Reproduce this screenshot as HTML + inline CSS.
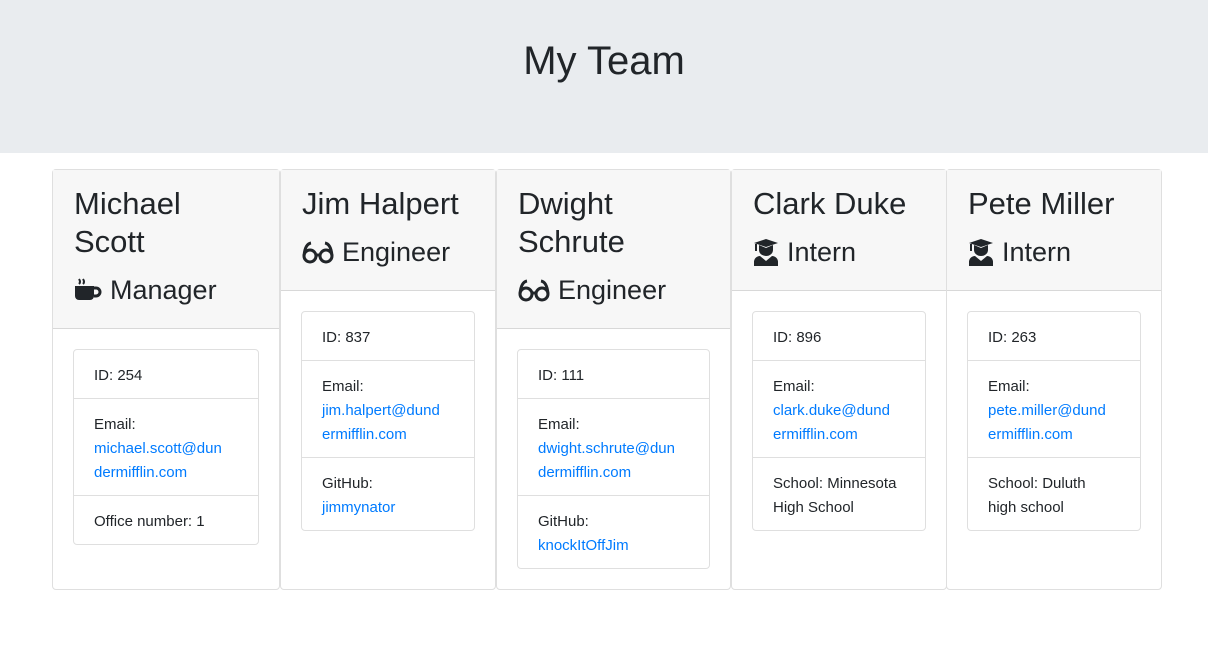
<!DOCTYPE html>
<html><head><meta charset="utf-8"><style>
*{box-sizing:border-box;margin:0;padding:0}
body{width:1208px;height:647px;background:#fff;font-family:"Liberation Sans",sans-serif;color:#212529;position:relative;overflow:hidden}
.jumbo{position:absolute;left:0;top:0;width:1208px;height:153px;background:#e9ecef}
.jumbo h1{position:absolute;left:0;right:0;top:36px;text-align:center;font-weight:400;font-size:40px;line-height:50px}
.card{position:absolute;top:169px;height:421px;border:1px solid rgba(0,0,0,.125);border-radius:4px;background:#fff}
.hd{background:#f7f7f7;border-bottom:1px solid rgba(0,0,0,.125);padding:15px 20px 21px 21px}
.hd h2{font-weight:400;font-size:31px;line-height:38px}
.hd h3{font-weight:400;font-size:27px;line-height:34px;margin-top:12px;display:flex;align-items:center}
.hd h3 svg{margin-right:8px}
.bd{padding:20px}
ul{list-style:none;border:1px solid rgba(0,0,0,.125);border-radius:4px}
li{padding:14px 20px 10px;font-size:15px;line-height:24px;border-top:1px solid rgba(0,0,0,.125)}
li:first-child{border-top:0}
a{color:#007bff;text-decoration:none}
</style></head><body>
<div class="jumbo"><h1>My Team</h1></div>

<div class="card" style="left:52px;width:228px">
<div class="hd"><h2>Michael<br>Scott</h2><h3><svg width="28" height="26" viewBox="0 0 28 26"><path d="M5 2 q2 3 0 5 M9 2 q2 3 0 5" stroke="#212529" stroke-width="2" fill="none"/><path d="M1 9 h19 v10 a4 4 0 0 1 -4 4 h-11 a4 4 0 0 1 -4 -4z" fill="#212529"/><path d="M20 11 h2 a4 4 0 0 1 0 8 h-2" stroke="#212529" stroke-width="3" fill="none"/></svg>Manager</h3></div>
<div class="bd"><ul><li>ID: 254</li><li>Email:<br><a>michael.scott@dun<br>dermifflin.com</a></li><li>Office number: 1</li></ul></div>
</div>

<div class="card" style="left:280px;width:216px">
<div class="hd"><h2>Jim Halpert</h2><h3><svg width="32" height="24" viewBox="0 0 32 24"><circle cx="8" cy="16" r="6" stroke="#212529" stroke-width="3" fill="none"/><circle cx="24" cy="16" r="6" stroke="#212529" stroke-width="3" fill="none"/><path d="M14 15 h4 M2 16 Q3 4 9 3 M30 16 Q29 4 23 3" stroke="#212529" stroke-width="3" fill="none"/></svg>Engineer</h3></div>
<div class="bd"><ul><li>ID: 837</li><li>Email:<br><a>jim.halpert@dund<br>ermifflin.com</a></li><li>GitHub:<br><a>jimmynator</a></li></ul></div>
</div>

<div class="card" style="left:496px;width:235px">
<div class="hd"><h2>Dwight<br>Schrute</h2><h3><svg width="32" height="24" viewBox="0 0 32 24"><circle cx="8" cy="16" r="6" stroke="#212529" stroke-width="3" fill="none"/><circle cx="24" cy="16" r="6" stroke="#212529" stroke-width="3" fill="none"/><path d="M14 15 h4 M2 16 Q3 4 9 3 M30 16 Q29 4 23 3" stroke="#212529" stroke-width="3" fill="none"/></svg>Engineer</h3></div>
<div class="bd"><ul><li>ID: 111</li><li>Email:<br><a>dwight.schrute@dun<br>dermifflin.com</a></li><li>GitHub:<br><a>knockItOffJim</a></li></ul></div>
</div>

<div class="card" style="left:731px;width:216px">
<div class="hd"><h2>Clark Duke</h2><h3><svg width="26" height="28" viewBox="0 0 26 28"><path d="M13 1 L25 5 L13 9 L1 5z" fill="#212529"/><path d="M6 7 v5 a7 6 0 0 0 14 0 v-5 l-7 3z" fill="#212529"/><path d="M3 6 v7" stroke="#212529" stroke-width="2"/><path d="M1 28 v-4 a6 6 0 0 1 6 -6 l6 5 l6 -5 a6 6 0 0 1 6 6 v4z" fill="#212529"/></svg>Intern</h3></div>
<div class="bd"><ul><li>ID: 896</li><li>Email:<br><a>clark.duke@dund<br>ermifflin.com</a></li><li>School: Minnesota<br>High School</li></ul></div>
</div>

<div class="card" style="left:946px;width:216px">
<div class="hd"><h2>Pete Miller</h2><h3><svg width="26" height="28" viewBox="0 0 26 28"><path d="M13 1 L25 5 L13 9 L1 5z" fill="#212529"/><path d="M6 7 v5 a7 6 0 0 0 14 0 v-5 l-7 3z" fill="#212529"/><path d="M3 6 v7" stroke="#212529" stroke-width="2"/><path d="M1 28 v-4 a6 6 0 0 1 6 -6 l6 5 l6 -5 a6 6 0 0 1 6 6 v4z" fill="#212529"/></svg>Intern</h3></div>
<div class="bd"><ul><li>ID: 263</li><li>Email:<br><a>pete.miller@dund<br>ermifflin.com</a></li><li>School: Duluth<br>high school</li></ul></div>
</div>
</body></html>
